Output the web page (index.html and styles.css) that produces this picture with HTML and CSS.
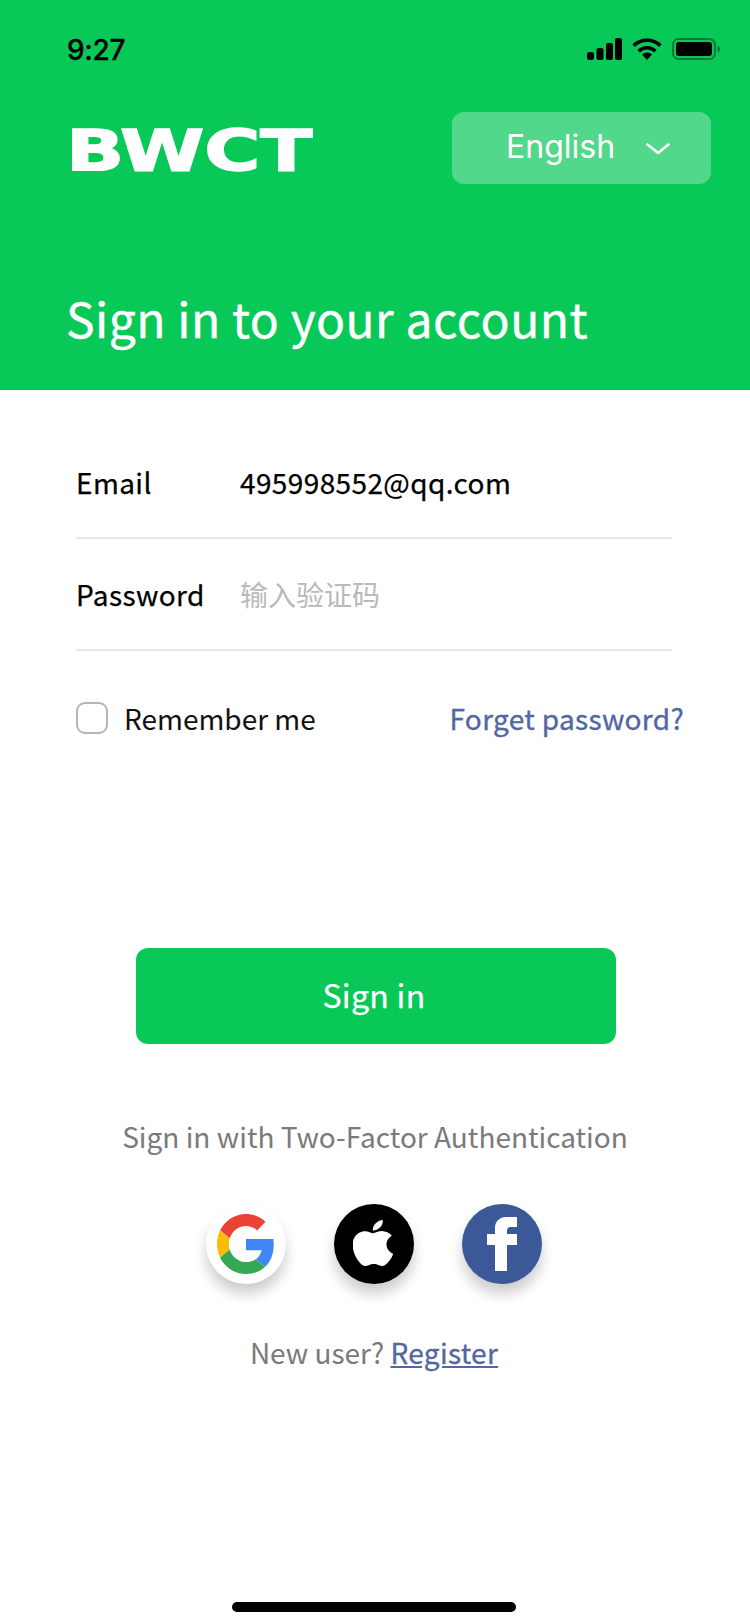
FILE: index.html
```html
<!DOCTYPE html>
<html lang="en">
<head>
<meta charset="utf-8">
<title>Sign in</title>
<link rel="stylesheet" href="styles.css">
</head>
<body>
<div class="app">
  <header class="hero">
    <div class="status">
      <span class="time">9:27</span>
      <div class="status-icons">
        <svg class="ic-signal" width="35" height="22" viewBox="0 0 35 22"><rect x="0" y="14" width="7" height="8" rx="2.5"/><rect x="9.5" y="10" width="7" height="12" rx="2"/><rect x="19" y="5" width="7" height="17" rx="2"/><rect x="28" y="0" width="7" height="22" rx="2"/></svg>
        <svg class="ic-wifi" width="30" height="22" viewBox="0 0 30 22"><path d="M15 22l-5-5.4a7.2 7.2 0 0 1 10 0z"/><path d="M6.6 13.2a12 12 0 0 1 16.8 0" fill="none" stroke="#000" stroke-width="3.6"/><path d="M1.6 7.6a19.5 19.5 0 0 1 26.8 0" fill="none" stroke="#000" stroke-width="3.6"/></svg>
        <svg class="ic-batt" width="48" height="22" viewBox="0 0 48 22"><rect x="1" y="1" width="42" height="20" rx="5.5" fill="none" stroke="#000" stroke-opacity=".38" stroke-width="2"/><rect x="4" y="4" width="36" height="14" rx="3"/><path d="M45.5 7.5v7c1.4-.5 2.5-2 2.5-3.5s-1.100-3-2.500-3.500z" fill-opacity=".4"/></svg>
      </div>
    </div>
    <div class="brand-row">
      <div class="logo"><span class="logo-text">BWCT</span></div>
      <button class="lang">
        <span>English</span>
        <svg width="24" height="12" viewBox="0 0 24 12"><path d="M1.500 1.500L12 10l10.500-8.500" fill="none" stroke="#fff" stroke-width="2.600" stroke-linecap="round" stroke-linejoin="round"/></svg>
      </button>
    </div>
    <h1 class="title">Sign in to your account</h1>
  </header>

  <main class="content">
    <div class="field">
      <span class="label">Email</span>
      <span class="value">495998552@qq.com</span>
    </div>
    <div class="field field-pass">
      <span class="label">Password</span>
      <span class="placeholder">输入验证码</span>
    </div>
    <div class="options">
      <label class="remember"><span class="check"></span><span>Remember me</span></label>
      <a class="forgot">Forget password?</a>
    </div>
    <button class="submit">Sign in</button>
    <p class="tfa">Sign in with Two-Factor Authentication</p>
    <div class="socials">
      <div class="social social-google">
        <svg width="58" height="60" viewBox="0 0 48 48" preserveAspectRatio="none"><path fill="#EA4335" d="M24 9.500c3.540 0 6.710 1.220 9.210 3.600l6.850-6.850C35.900 2.380 30.470 0 24 0 14.620 0 6.510 5.380 2.560 13.220l7.980 6.190C12.430 13.720 17.740 9.500 24 9.500z"/><path fill="#4285F4" d="M46.980 24.550c0-1.570-.15-3.090-.38-4.550H24v9.020h12.940c-.58 2.960-2.260 5.480-4.780 7.180l7.730 6c4.510-4.180 7.090-10.360 7.090-17.650z"/><path fill="#FBBC05" d="M10.530 28.590c-.48-1.450-.76-2.990-.76-4.590s.27-3.140.76-4.590l-7.980-6.190C.92 16.460 0 20.120 0 24c0 3.880.92 7.540 2.560 10.780l7.970-6.190z"/><path fill="#34A853" d="M24 48c6.480 0 11.930-2.130 15.890-5.810l-7.730-6c-2.150 1.450-4.920 2.300-8.160 2.300-6.260 0-11.570-4.220-13.470-9.910l-7.980 6.190C6.510 42.620 14.620 48 24 48z"/></svg>
      </div>
      <div class="social social-apple">
        <svg class="apple-mark" width="40" height="46" viewBox="2.400 0 19.300 24" preserveAspectRatio="none"><path fill="#fff" d="M12.152 6.896c-.948 0-2.415-1.078-3.960-1.040-2.040.027-3.910 1.183-4.961 3.014-2.117 3.675-.546 9.103 1.519 12.090 1.013 1.454 2.208 3.090 3.792 3.039 1.520-.065 2.090-.987 3.935-.987 1.831 0 2.350.987 3.960.948 1.637-.026 2.676-1.480 3.676-2.948 1.156-1.688 1.636-3.325 1.662-3.415-.039-.013-3.182-1.221-3.220-4.857-.026-3.040 2.480-4.494 2.597-4.559-1.429-2.090-3.623-2.324-4.390-2.376-2-.156-3.675 1.090-4.610 1.090zM15.530 3.830c.843-1.012 1.400-2.427 1.245-3.830-1.207.052-2.662.805-3.532 1.818-.780.896-1.454 2.338-1.273 3.714 1.338.104 2.715-.688 3.559-1.701"/></svg>
      </div>
      <div class="social social-fb">
        <svg width="30" height="54" viewBox="0 0 30 54"><path fill="#fff" d="M8 54V28H0V17h8v-6C8 4 13 0 19 0h11v10h-6c-3 0-4 1.500-4 4v3h10v11H20v26z"/></svg>
      </div>
    </div>
    <p class="register">New user? <a class="register-link">Register</a></p>
  </main>
  <div class="home-wrap"><div class="home"></div></div>
</div>
</body>
</html>
```
FILE: styles.css
```css
* { box-sizing: border-box; }
html, body { margin: 0; padding: 0; background: #fff; }
body { width: 750px; height: 1624px; overflow: hidden; font-family: "Noto Sans CJK SC", "Noto Sans", sans-serif; }
.app { width: 750px; height: 1624px; display: flex; flex-direction: column; }

.hero { height: 390px; background: #08c858; padding-top: 32px; flex: none; }
.status { height: 34px; display: flex; justify-content: space-between; align-items: center; padding: 0 30px 0 67px; }
.time { font-family: Inter, "Liberation Sans", sans-serif; font-weight: 500; font-size: 28px; letter-spacing: -0.3px; color: #000; padding-top: 2px; -webkit-text-stroke: .3px #000; }
.status-icons { display: flex; align-items: center; gap: 10px; }
.status-icons svg { display: block; fill: #000; }

.brand-row { display: flex; justify-content: space-between; align-items: center; margin-top: 46px; padding: 0 39px 0 66px; height: 72px; }
.logo { width: 248px; height: 44px; overflow: visible; display: flex; align-items: center; margin-top: 6px; }
.logo-text { display: block; font-family: "DejaVu Sans", sans-serif; font-weight: 700; font-size: 57px; line-height: 44px; color: #fff; transform-origin: left center; transform: scaleX(1.34); -webkit-text-stroke: 1.500px #fff; white-space: nowrap; }
.lang { width: 259px; height: 72px; background: rgba(255, 255, 255, .3); border: 0; border-radius: 12px; color: #fff; display: flex; align-items: center; gap: 31px; padding: 0 0 4px 54px; font-family: Inter, "Liberation Sans", sans-serif; font-size: 32px; }
.lang svg { display: block; margin-top: 6px; }

.title { margin: 100px 0 0 66px; font-size: 48px; line-height: 66px; font-weight: 400; letter-spacing: .48px; -webkit-text-stroke: .4px #fff; color: #fff; white-space: nowrap; }

.content { flex: 1; padding: 0 76px; display: flex; flex-direction: column; }
.field { height: 149px; padding-top: 36px; display: flex; align-items: center; border-bottom: 2px solid #e7e7e7; width: 596px; font-size: 28px; }
.field-pass { height: 112px; padding-top: 0; }
.label { width: 164px; flex: none; color: #000; letter-spacing: .39px; -webkit-text-stroke: .25px #000; }
.value { color: #000; letter-spacing: .39px; -webkit-text-stroke: .25px #000; }
.placeholder { color: #b9b9b9; }

.options { display: flex; align-items: center; justify-content: space-between; margin-top: 51px; height: 32px; width: 608px; font-size: 28px; }
.remember { display: flex; align-items: center; gap: 16px; color: #111; }
.check { width: 32px; height: 32px; border: 2px solid #b5b5b5; border-radius: 9px; background: #fff; }
.forgot { color: #5367a2; white-space: nowrap; letter-spacing: .32px; -webkit-text-stroke: .35px #5367a2; }

.submit { display: block; width: 480px; height: 96px; margin: 214px 0 0 60px; padding: 0 4px 4px 0; background: #08c858; color: #fff; border: 0; border-radius: 12px; font-family: inherit; font-size: 32px; letter-spacing: .3px; -webkit-text-stroke: .25px #fff; }
.tfa { margin: 70px 0 0; font-size: 28px; line-height: 44px; text-align: center; color: #7a7a7a; width: 598px; }
.socials { display: flex; gap: 48px; margin: 46px 0 0 130px; }
.social { width: 80px; height: 80px; border-radius: 50%; display: flex; align-items: center; justify-content: center; box-shadow: 0 10px 14px rgba(0, 0, 0, .2); }
.social-google { background: #fff; }
.social-apple { background: #000; }
.apple-mark { margin: 0 2px 3px 0; }
.social-fb { background: #3b5998; }
.register { margin: 46px 0 0; font-size: 28px; line-height: 44px; text-align: center; color: #7a7a7a; width: 596px; }
.register-link { color: #5367a2; text-decoration: underline; letter-spacing: .3px; -webkit-text-stroke: .3px #5367a2; }

.home-wrap { flex: none; height: 22px; display: flex; justify-content: center; padding-right: 2px; }
.home { width: 284px; height: 10px; background: #000; border-radius: 5px; }
```
